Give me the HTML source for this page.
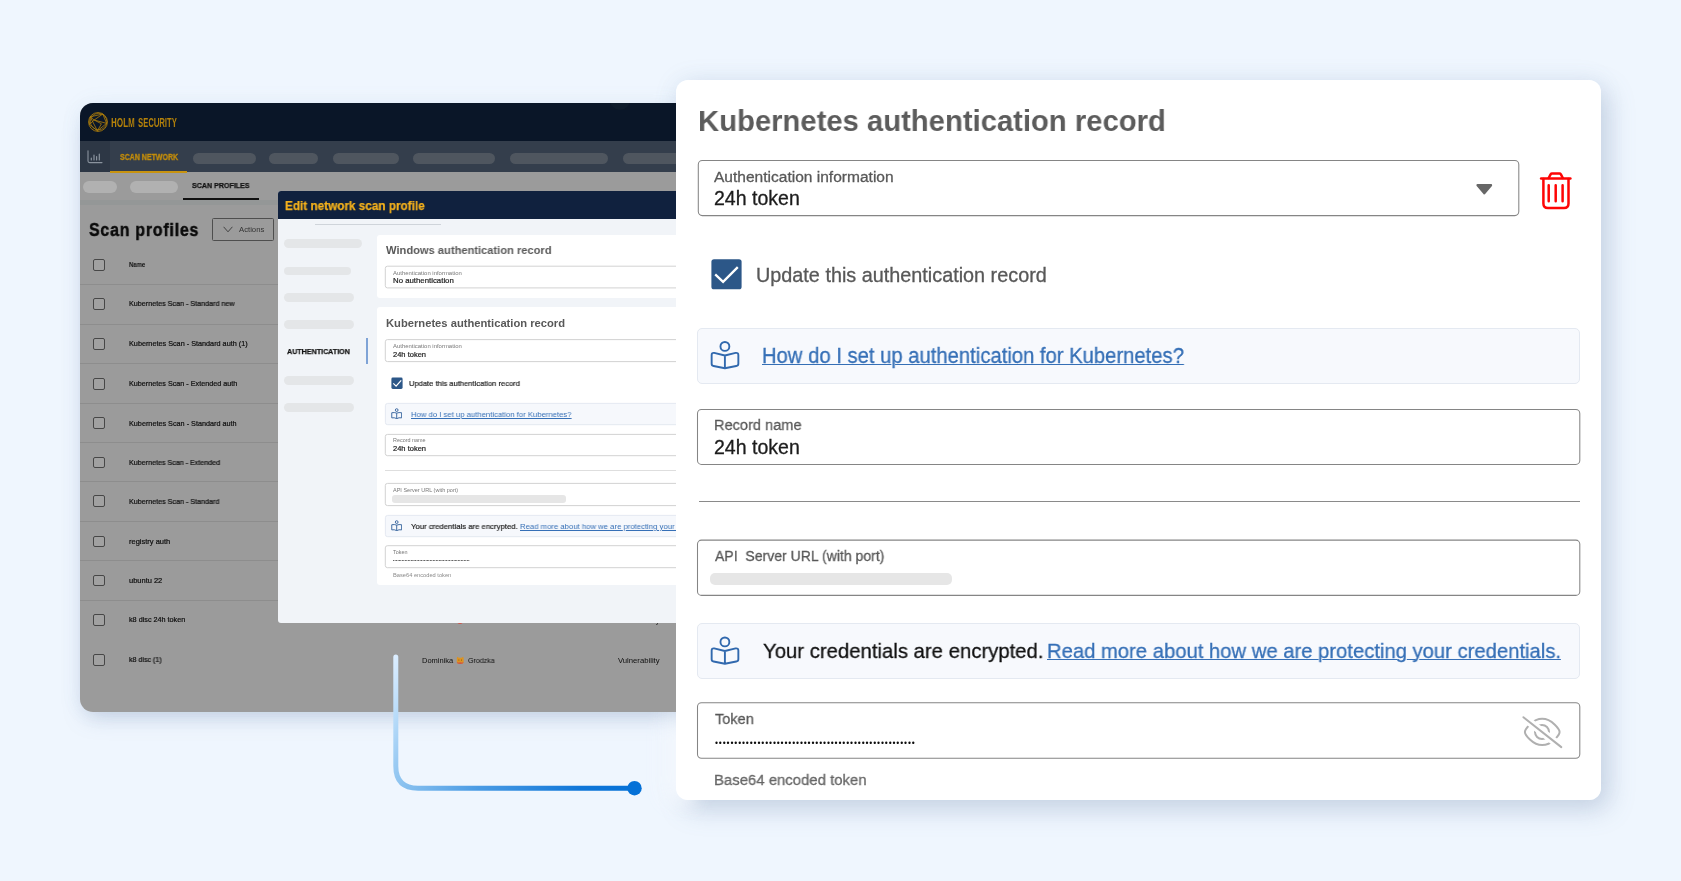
<!DOCTYPE html>
<html lang="en">
<head>
<meta charset="utf-8">
<title>Kubernetes authentication record</title>
<style>
*{box-sizing:border-box;margin:0;padding:0}
html,body{width:1681px;height:881px;overflow:hidden}
body{background:#eff6fe;font-family:"Liberation Sans",sans-serif;position:relative}
.abs,.t,.page,.clip{position:absolute}
.page{width:1681px;height:881px}
.clip{overflow:hidden}
.t{will-change:transform;white-space:nowrap;line-height:1em;transform-origin:0 0;display:block}
.pill{position:absolute;border-radius:10px}
.cb{position:absolute;width:11.4px;height:11.6px;left:93.3px;border:1px solid #474747;border-radius:2px;background:#a1a1a1}
.row{position:absolute;left:80px;width:600px;height:1px;background:#8d8d8d}
.binfo{position:absolute;border:1px solid #e4e9f1;border-radius:5px;background:#f7f9fd}
</style>
</head>
<body>


<!-- right card shadow (painted beneath the app screenshot) -->
<div class="abs" style="left:676px;top:80px;width:925px;height:720px;border-radius:12px;box-shadow:0 0 24px rgba(130,155,195,.11),8px 10px 26px rgba(105,130,168,.27)"></div>
<!-- ================= LEFT APP SCREENSHOT ================= -->
<div class="abs" style="left:80px;top:103px;width:600px;height:609px;border-radius:13px 0 0 13px;box-shadow:0 0 22px rgba(120,150,195,.07),0 10px 22px -6px rgba(105,130,168,.35)"></div>
<div class="abs" style="left:676px;top:716px;width:26px;height:80px;border-radius:0 0 0 12px;box-shadow:-10px 6px 20px 2px rgba(247,251,255,.9)"></div>
<div class="clip" id="left" style="left:80px;top:103px;width:610px;height:609px;border-radius:13px 0 0 13px;background:#9b9b9b">
 <div class="page" style="left:-80px;top:-103px">
  <!-- top bar -->
  <div class="abs" style="left:80px;top:103px;width:610px;height:38px;background:#0a1628"></div>
  <svg class="abs" style="left:87px;top:111px" width="22" height="22" viewBox="0 0 22 22" fill="none" stroke="#ad7d0b" stroke-width="0.9">
    <circle cx="11" cy="11" r="9.4"/>
    <circle cx="11.6" cy="10.6" r="8.2" stroke-width="0.7"/>
    <path d="M3.2 5.8 L15.8 3 L19.6 12.4 L10.4 19.8 L2.4 13.4 Z M3.2 5.8 L10.4 19.8 M15.8 3 L7.2 9 L19.6 12.4 M7.2 9 L2.4 13.4 M7.2 9 L3.2 5.8 M7.2 9 L14.4 12.8 L10.4 19.8" stroke-width="0.8"/>
  </svg>
  <div class="abs" style="left:610.3px;top:89.5px;width:20px;height:20px;border-radius:50%;background:#0e1b2b"></div>
  <!-- nav bar -->
  <div class="abs" style="left:80px;top:141px;width:610px;height:31px;background:#343e4c"></div>
  <div class="abs" style="left:80px;top:141px;width:30.2px;height:31px;background:#2d3745"></div>
  <svg class="abs" style="left:86.5px;top:150px" width="16" height="14" viewBox="0 0 16 14" fill="none" stroke="#8a939e" stroke-width="1.1" stroke-linecap="round">
    <path d="M1 0.8 V11 Q1 12.6 2.6 12.6 H15"/>
    <path d="M4.3 8.2 V10 M7 5 V10 M9.6 6.6 V10 M12.3 4.2 V10" stroke-width="1.2"/>
  </svg>
  <div class="abs" style="left:110.2px;top:170.8px;width:76.8px;height:1.8px;background:#c8930f"></div>
  <div class="pill" style="left:193px;top:152.7px;width:63px;height:11.3px;background:#4f565f"></div>
  <div class="pill" style="left:269px;top:152.7px;width:48.7px;height:11.3px;background:#4f565f"></div>
  <div class="pill" style="left:333.3px;top:152.7px;width:65.5px;height:11.3px;background:#4f565f"></div>
  <div class="pill" style="left:412.9px;top:152.7px;width:82.6px;height:11.3px;background:#4f565f"></div>
  <div class="pill" style="left:509.6px;top:152.7px;width:98.9px;height:11.3px;background:#4f565f"></div>
  <div class="pill" style="left:622.6px;top:152.7px;width:80px;height:11.3px;background:#4f565f"></div>
  <!-- sub bar -->
  <div class="pill" style="left:83px;top:181.2px;width:34.3px;height:11.7px;background:#b1b1b1"></div>
  <div class="pill" style="left:130.2px;top:181.2px;width:48px;height:11.7px;background:#b1b1b1"></div>
  <div class="abs" style="left:183px;top:198.3px;width:76px;height:1.7px;background:#111"></div>
  <div class="abs" style="left:80px;top:200px;width:610px;height:4.5px;background:#949797"></div>
  <!-- actions button -->
  <div class="abs" style="left:212px;top:218px;width:62px;height:22.8px;border:1px solid #4e4e4e;border-radius:1.5px"></div>
  <svg class="abs" style="left:223px;top:225.5px" width="10" height="7" viewBox="0 0 10 7" fill="none" stroke="#2c2c2c" stroke-width="0.8"><path d="M0.6 0.8 L5 5.8 L9.4 0.8"/></svg>
  <!-- table -->
  <div class="cb" style="top:259px"></div>
  <div class="row" style="top:284px"></div>
  <div class="cb" style="top:298.3px"></div>
  <div class="row" style="top:324px"></div>
  <div class="cb" style="top:338.3px"></div>
  <div class="row" style="top:363.4px"></div>
  <div class="cb" style="top:378px"></div>
  <div class="row" style="top:403px"></div>
  <div class="cb" style="top:417.4px"></div>
  <div class="row" style="top:442.3px"></div>
  <div class="cb" style="top:456.8px"></div>
  <div class="row" style="top:481.3px"></div>
  <div class="cb" style="top:495.4px"></div>
  <div class="row" style="top:521px"></div>
  <div class="cb" style="top:535.6px"></div>
  <div class="row" style="top:560.2px"></div>
  <div class="cb" style="top:574.6px"></div>
  <div class="row" style="top:600.2px"></div>
  <div class="cb" style="top:614px"></div>
  <div class="cb" style="top:654.1px"></div>
<span class="t" style="left:110.80px;top:116.26px;font-size:13.6px;color:#b5820a;font-weight:700;transform:scaleX(0.5945);">HOLM</span>
<span class="t" style="left:138.00px;top:116.26px;font-size:13.6px;color:#b5820a;font-weight:700;transform:scaleX(0.5651);">SECURITY</span>
<span class="t" style="left:119.80px;top:153.25px;font-size:8.9px;color:#c48d0a;font-weight:700;transform:scaleX(0.7913);-webkit-text-stroke:0.3px currentColor;">SCAN NETWORK</span>
<span class="t" style="left:192.25px;top:182.26px;font-size:7.8px;color:#111;font-weight:700;transform:scaleX(0.9104);-webkit-text-stroke:0.25px currentColor;">SCAN PROFILES</span>
<span class="t" style="left:88.50px;top:221.26px;font-size:18.7px;color:#0b0b0b;font-weight:700;letter-spacing:0.9px;transform:scaleX(0.8532);-webkit-text-stroke:0.45px currentColor;">Scan profiles</span>
<span class="t" style="left:239.00px;top:226.26px;font-size:7.6px;color:#333;transform:scaleX(1.0157);">Actions</span>
<span class="t" style="left:128.75px;top:262.26px;font-size:6.4px;color:#111;font-weight:700;transform:scaleX(0.9411);">Name</span>
<span class="t" style="left:128.75px;top:300.25px;font-size:7.2px;color:#0e0e0e;transform:scaleX(0.9959);-webkit-text-stroke:0.2px currentColor;">Kubernetes Scan - Standard new</span>
<span class="t" style="left:128.75px;top:340.25px;font-size:7.2px;color:#0e0e0e;transform:scaleX(1.0100);-webkit-text-stroke:0.2px currentColor;">Kubernetes Scan - Standard auth (1)</span>
<span class="t" style="left:128.75px;top:380.25px;font-size:7.2px;color:#0e0e0e;transform:scaleX(1.0033);-webkit-text-stroke:0.2px currentColor;">Kubernetes Scan - Extended auth</span>
<span class="t" style="left:128.75px;top:420.25px;font-size:7.2px;color:#0e0e0e;transform:scaleX(1.0090);-webkit-text-stroke:0.2px currentColor;">Kubernetes Scan - Standard auth</span>
<span class="t" style="left:128.75px;top:459.26px;font-size:7.2px;color:#0e0e0e;transform:scaleX(0.9907);-webkit-text-stroke:0.2px currentColor;">Kubernetes Scan - Extended</span>
<span class="t" style="left:128.75px;top:498.25px;font-size:7.2px;color:#0e0e0e;transform:scaleX(0.9950);-webkit-text-stroke:0.2px currentColor;">Kubernetes Scan - Standard</span>
<span class="t" style="left:128.75px;top:538.26px;font-size:7.2px;color:#0e0e0e;transform:scaleX(1.0429);-webkit-text-stroke:0.2px currentColor;">registry auth</span>
<span class="t" style="left:128.75px;top:577.26px;font-size:7.2px;color:#0e0e0e;transform:scaleX(1.0398);-webkit-text-stroke:0.2px currentColor;">ubuntu 22</span>
<span class="t" style="left:128.75px;top:616.26px;font-size:7.2px;color:#0e0e0e;transform:scaleX(1.0055);-webkit-text-stroke:0.2px currentColor;">k8 disc 24h token</span>
<span class="t" style="left:128.75px;top:656.26px;font-size:7.2px;color:#0e0e0e;transform:scaleX(0.9845);-webkit-text-stroke:0.2px currentColor;">k8 disc (1)</span>
<span class="t" style="left:421.80px;top:657.26px;font-size:7.2px;color:#0e0e0e;transform:scaleX(1.0447);">Dominika</span>
<span class="t" style="left:467.80px;top:657.26px;font-size:7.2px;color:#0e0e0e;transform:scaleX(0.9755);">Grodzka</span>
<span class="t" style="left:617.50px;top:657.26px;font-size:7.2px;color:#0e0e0e;transform:scaleX(1.0689);">Vulnerability</span>
<span class="t" style="left:617.50px;top:617.26px;font-size:7.2px;color:#0e0e0e;transform:scaleX(1.0689);">Vulnerability</span>
  <!-- cat emoji -->
  <svg class="abs" style="left:456px;top:656px" width="9" height="9" viewBox="0 0 9 9"><path d="M0.8 2.4 L1.1 0.7 L2.9 1.7 H5.5 L7.3 0.7 L7.6 2.4 V6 Q7.6 7.9 4.2 7.9 Q0.8 7.9 0.8 6 Z" fill="#dc9322"/><path d="M0.9 6 Q2 6.9 4.2 6.3 Q6.4 6.9 7.5 6 Q7.6 7.9 4.2 7.9 Q0.8 7.9 0.9 6 Z" fill="#cf5349"/><circle cx="2.9" cy="4" r="0.5" fill="#7a4a12"/><circle cx="5.5" cy="4" r="0.5" fill="#7a4a12"/></svg>
  <div class="abs" style="left:457px;top:619px;width:6.3px;height:5px;border-radius:0 0 3px 3px;background:#cf5349"></div>

  <!-- ============ modal ============ -->
  <div class="clip" style="left:278px;top:191px;width:420px;height:432px;border-radius:3px 0 0 3px;background:#f1f4f8">
   <div class="page" style="left:-278px;top:-191px">
    <div class="abs" style="left:278px;top:191px;width:420px;height:28px;background:#10213e"></div>
    <div class="abs" style="left:314.5px;top:223.7px;width:126.3px;height:0.8px;background:#cfd4da"></div>
    <!-- sidebar -->
    <div class="pill" style="left:284px;top:239px;width:77.5px;height:8.6px;background:#e4e6e8"></div>
    <div class="pill" style="left:284px;top:266.6px;width:67px;height:8.6px;background:#e4e6e8"></div>
    <div class="pill" style="left:284px;top:293px;width:70px;height:8.6px;background:#e4e6e8"></div>
    <div class="pill" style="left:284px;top:320.2px;width:70px;height:8.6px;background:#e4e6e8"></div>
    <div class="abs" style="left:366.2px;top:337.5px;width:1.8px;height:26.5px;background:#7fa3d6"></div>
    <div class="pill" style="left:284px;top:376px;width:70px;height:8.6px;background:#e4e6e8"></div>
    <div class="pill" style="left:284px;top:403px;width:70px;height:8.8px;background:#e4e6e8"></div>
    <!-- card 1 -->
    <div class="abs" style="left:376.5px;top:234.5px;width:320px;height:63px;background:#fff;border-radius:3px 0 0 3px"></div>
    <!-- card 2 -->
    <div class="abs" style="left:376.5px;top:306.8px;width:320px;height:278.2px;background:#fff;border-radius:3px 0 0 3px"></div>
    <svg class="abs" style="left:376px;top:230px" width="320" height="360" viewBox="376 230 320 360" fill="#fff" stroke="#cdcdcd" stroke-width="0.9">
      <rect x="385.3" y="266.2" width="330" height="21.7" rx="2.2"/>
      <rect x="385.3" y="339.6" width="330" height="22" rx="2.2"/>
      <rect x="385.3" y="434.4" width="330" height="21.3" rx="2.2"/>
      <rect x="385.3" y="483.4" width="330" height="22.2" rx="2.2"/>
      <rect x="385.3" y="545.7" width="330" height="22" rx="2.2"/>
      <rect x="385.4" y="403.4" width="330" height="21.3" rx="2.2" fill="#f6f8fc" stroke="#e2e7ef"/>
      <rect x="385.4" y="515.4" width="330" height="21.3" rx="2.2" fill="#f6f8fc" stroke="#e2e7ef"/>
      <rect x="391.4" y="377.5" width="11.2" height="11.5" rx="1.4" fill="#2c5788" stroke="none"/>
      <path d="M393.3 383.4 L396.1 386.2 L401.2 380.4" fill="none" stroke="#fff" stroke-width="1.2"/>
    </svg>
    <svg class="abs" style="left:390.8px;top:407.8px" width="11.4" height="11.4" viewBox="0 0 30 30" fill="none" stroke="#2f5f9a" stroke-width="2.4" stroke-linejoin="round"><circle cx="15" cy="5.5" r="3.6"/><path d="M15 13.5 Q9 11 2 12.5 V26 Q9 24.5 15 28 Q21 24.5 28 26 V12.5 Q21 11 15 13.5 V28"/></svg>
    <div class="abs" style="left:385px;top:469.6px;width:320px;height:0.8px;background:#dedede"></div>
    <div class="pill" style="left:392px;top:494.7px;width:174.3px;height:8.4px;background:#e6e6e6;border-radius:3px"></div>
    <svg class="abs" style="left:390.8px;top:519.8px" width="11.4" height="11.4" viewBox="0 0 30 30" fill="none" stroke="#2f5f9a" stroke-width="2.4" stroke-linejoin="round"><circle cx="15" cy="5.5" r="3.6"/><path d="M15 13.5 Q9 11 2 12.5 V26 Q9 24.5 15 28 Q21 24.5 28 26 V12.5 Q21 11 15 13.5 V28"/></svg>
    <span class="t" style="left:284.50px;top:200.26px;font-size:12.6px;color:#f4b11c;font-weight:700;transform:scaleX(0.9332);-webkit-text-stroke:0.25px currentColor;">Edit network scan profile</span>
<span class="t" style="left:286.75px;top:348.25px;font-size:7.6px;color:#111;font-weight:700;transform:scaleX(0.9391);-webkit-text-stroke:0.25px currentColor;">AUTHENTICATION</span>
<span class="t" style="left:385.75px;top:245.26px;font-size:11.2px;color:#585858;font-weight:700;transform:scaleX(0.9946);">Windows authentication record</span>
<span class="t" style="left:392.50px;top:271.26px;font-size:5.4px;color:#777;transform:scaleX(1.1030);">Authentication information</span>
<span class="t" style="left:392.50px;top:277.25px;font-size:7.3px;color:#222;transform:scaleX(1.0708);-webkit-text-stroke:0.2px currentColor;">No authentication</span>
<span class="t" style="left:385.75px;top:318.26px;font-size:11.2px;color:#585858;font-weight:700;">Kubernetes authentication record</span>
<span class="t" style="left:392.50px;top:344.26px;font-size:5.4px;color:#777;transform:scaleX(1.1030);">Authentication information</span>
<span class="t" style="left:392.50px;top:351.25px;font-size:7.3px;color:#222;transform:scaleX(1.0314);-webkit-text-stroke:0.2px currentColor;">24h token</span>
<span class="t" style="left:408.75px;top:380.25px;font-size:7.9px;color:#222;transform:scaleX(0.9574);-webkit-text-stroke:0.2px currentColor;">Update this authentication record</span>
<span class="t" style="left:411.00px;top:411.26px;font-size:8.0px;color:#356fb6;transform:scaleX(0.9622);text-decoration:underline;text-decoration-thickness:0.6px;text-underline-offset:1px;">How do I set up authentication for Kubernetes?</span>
<span class="t" style="left:392.50px;top:438.26px;font-size:5.4px;color:#777;transform:scaleX(1.0043);">Record name</span>
<span class="t" style="left:392.50px;top:445.25px;font-size:7.3px;color:#222;transform:scaleX(1.0314);-webkit-text-stroke:0.2px currentColor;">24h token</span>
<span class="t" style="left:392.50px;top:488.26px;font-size:5.4px;color:#777;transform:scaleX(1.0233);">API Server URL (with port)</span>
<span class="t" style="left:411.00px;top:523.26px;font-size:7.9px;color:#222;transform:scaleX(0.9794);-webkit-text-stroke:0.2px currentColor;">Your credentials are encrypted.</span>
<span class="t" style="left:519.75px;top:523.26px;font-size:7.9px;color:#356fb6;transform:scaleX(0.9788);text-decoration:underline;text-decoration-thickness:0.6px;text-underline-offset:1px;">Read more about how we are protecting your credentials.</span>
<span class="t" style="left:392.50px;top:550.26px;font-size:5.4px;color:#777;transform:scaleX(1.0080);">Token</span>
<span class="t" style="left:392.60px;top:560.26px;font-size:3.4px;color:#111;letter-spacing:0.286px;">••••••••••••••••••••••••••••••••••••••••••••••••••••</span>
<span class="t" style="left:392.50px;top:573.26px;font-size:5.4px;color:#8a8a8a;transform:scaleX(1.0562);">Base64 encoded token</span>
   </div>
  </div>
 </div>
</div>

<!-- connector -->
<svg class="abs" style="left:380px;top:645px" width="280" height="160" viewBox="380 645 280 160" fill="none">
  <defs>
    <linearGradient id="cg" gradientUnits="userSpaceOnUse" x1="396" y1="655" x2="634" y2="788">
      <stop offset="0" stop-color="#dbedff"/>
      <stop offset="0.12" stop-color="#b4d9f8"/>
      <stop offset="0.19" stop-color="#9bcbf3"/>
      <stop offset="0.238" stop-color="#8ec4f0"/>
      <stop offset="0.5" stop-color="#4a9be4"/>
      <stop offset="0.83" stop-color="#0f76d8"/>
      <stop offset="1" stop-color="#0571d7"/>
    </linearGradient>
  </defs>
  <path d="M395.8 657 V766 Q395.8 788.2 418 788.2 H634" stroke="url(#cg)" stroke-width="5" stroke-linecap="round"/>
  <circle cx="634.5" cy="788.2" r="7.2" fill="#0571d7"/>
</svg>

<!-- ================= RIGHT CARD ================= -->
<div class="abs" style="left:676px;top:80px;width:925px;height:720px;border-radius:12px;background:#fff"></div>

<svg class="abs" style="left:676px;top:80px" width="925" height="720" viewBox="676 80 925 720" fill="#fff" stroke="#858585" stroke-width="1.05">
  <rect x="698.3" y="160.5" width="820.5" height="55.1" rx="4"/>
  <rect x="697.5" y="409.5" width="882.3" height="54.9" rx="4"/>
  <rect x="697.5" y="540.1" width="882.3" height="55.3" rx="4"/>
  <rect x="697.5" y="702.7" width="882.3" height="55.6" rx="4"/>
</svg>
<svg class="abs" style="left:1474px;top:182px" width="22" height="16" viewBox="0 0 22 16"><path d="M3.5 3.2 H17.1 L10.3 11.4 Z" fill="#676767" stroke="#676767" stroke-width="2.2" stroke-linejoin="round"/></svg>
<svg class="abs" style="left:1538px;top:170px" width="36" height="42" viewBox="0 0 36 42" fill="none" stroke="#fe0505" stroke-width="2.5" stroke-linecap="round" stroke-linejoin="round">
  <path d="M3.1 8.6 H32.4"/>
  <path d="M10.7 8 L12.6 4.4 Q13.1 3.6 14 3.6 H21.5 Q22.4 3.6 22.9 4.4 L24.8 8"/>
  <path d="M5.4 9 V33.4 Q5.4 37.9 9.9 37.9 H26 Q30.5 37.9 30.5 33.4 V9"/>
  <path d="M10.7 15.2 V31.2 M17.7 15.2 V31.2 M24.6 15.2 V31.2"/>
</svg>

<svg class="abs" style="left:710px;top:258px" width="34" height="34" viewBox="0 0 34 34" fill="none"><rect x="1.4" y="1.2" width="30.2" height="30.1" rx="2.6" fill="#2c5788"/><path d="M5.2 16.3 L13.1 23.9 L27.8 9.1" stroke="#fff" stroke-width="2.3"/></svg>

<div class="binfo" style="left:696.8px;top:327.8px;width:883.2px;height:56.2px"></div>
<svg class="abs" style="left:708px;top:338px" width="34" height="34" viewBox="0 0 34 34" fill="none" stroke="#3169ae" stroke-width="1.9" stroke-linejoin="round"><circle cx="16.9" cy="8.4" r="4.45"/><path transform="translate(0 0)" d="M16.9 17.5 L6.2 14.9 Q3.65 14.5 3.65 17 V25.7 Q3.65 27.6 5.6 28 L16.9 30.3 L28.2 28 Q30.35 27.6 30.35 25.7 V17 Q30.35 14.5 27.6 14.9 L16.9 17.5 V30.3"/></svg>

<div class="abs" style="left:699px;top:501.2px;width:880.5px;height:1.1px;background:#8a8a8a"></div>
<div class="pill" style="left:710px;top:573.2px;width:241.5px;height:11.8px;background:#e6e6e6;border-radius:5px"></div>

<div class="binfo" style="left:696.8px;top:623px;width:883.2px;height:56px"></div>
<svg class="abs" style="left:708px;top:633px" width="34" height="34" viewBox="0 0 34 34" fill="none" stroke="#3169ae" stroke-width="1.9" stroke-linejoin="round"><circle cx="16.9" cy="8.9" r="4.45"/><path transform="translate(0 0.5)" d="M16.9 17.5 L6.2 14.9 Q3.65 14.5 3.65 17 V25.7 Q3.65 27.6 5.6 28 L16.9 30.3 L28.2 28 Q30.35 27.6 30.35 25.7 V17 Q30.35 14.5 27.6 14.9 L16.9 17.5 V30.3"/></svg>

<svg class="abs" style="left:1520px;top:712px" width="46" height="40" viewBox="0 0 46 40" fill="none" stroke="#b0b0b0" stroke-width="2" stroke-linecap="round" stroke-linejoin="round">
  <path d="M4.9 20 C4.9 17.5 12.5 6.8 22.2 6.8 C32 6.8 39.6 17.5 39.6 20 C39.6 22.5 32 33.1 22.2 33.1 C12.5 33.1 4.9 22.5 4.9 20 Z"/>
  <circle cx="22" cy="20" r="7"/>
  <path d="M5.5 6.9 L39.5 33.7" stroke="#fff" stroke-width="8" stroke-linecap="butt"/>
  <path d="M3.4 5.2 L41.3 35.1"/>
</svg>
<span class="t" style="left:697.57px;top:106.25px;font-size:30.3px;color:#5c5c5c;font-weight:700;transform:scaleX(0.9650);">Kubernetes authentication record</span>
<span class="t" style="left:714.25px;top:169.26px;font-size:15.5px;color:#585858;transform:scaleX(1.0022);-webkit-text-stroke:0.3px currentColor;">Authentication information</span>
<span class="t" style="left:714.30px;top:189.26px;font-size:19.4px;color:#1c1c1c;transform:scaleX(1.0072);-webkit-text-stroke:0.3px currentColor;">24h token</span>
<span class="t" style="left:755.72px;top:266.25px;font-size:19.3px;color:#585858;transform:scaleX(1.0276);-webkit-text-stroke:0.3px currentColor;">Update this authentication record</span>
<span class="t" style="left:762.31px;top:345.26px;font-size:21.6px;color:#356fb6;transform:scaleX(0.9373);text-decoration:underline;text-decoration-thickness:1.3px;text-underline-offset:1px;-webkit-text-stroke:0.3px currentColor;">How do I set up authentication for Kubernetes?</span>
<span class="t" style="left:714.06px;top:417.26px;font-size:15.5px;color:#585858;transform:scaleX(0.9407);-webkit-text-stroke:0.3px currentColor;">Record name</span>
<span class="t" style="left:714.30px;top:438.26px;font-size:19.4px;color:#1c1c1c;transform:scaleX(1.0072);-webkit-text-stroke:0.3px currentColor;">24h token</span>
<span class="t" style="left:714.50px;top:548.25px;font-size:15.5px;color:#585858;transform:scaleX(0.9048);-webkit-text-stroke:0.3px currentColor;">API&nbsp; Server URL (with port)</span>
<span class="t" style="left:763.25px;top:640.25px;font-size:21.1px;color:#111;transform:scaleX(0.9634);-webkit-text-stroke:0.3px currentColor;">Your credentials are encrypted.</span>
<span class="t" style="left:1047.29px;top:640.25px;font-size:21.1px;color:#356fb6;transform:scaleX(0.9593);text-decoration:underline;text-decoration-thickness:1.3px;text-underline-offset:1px;-webkit-text-stroke:0.3px currentColor;">Read more about how we are protecting your credentials.</span>
<span class="t" style="left:714.50px;top:711.25px;font-size:15.5px;color:#585858;transform:scaleX(0.9389);-webkit-text-stroke:0.3px currentColor;">Token</span>
<span class="t" style="left:715.00px;top:739.25px;font-size:8.6px;color:#0d0d0d;letter-spacing:0.85px;">••••••••••••••••••••••••••••••••••••••••••••••••••••</span>
<span class="t" style="left:713.54px;top:772.25px;font-size:15.5px;color:#666;transform:scaleX(0.9621);-webkit-text-stroke:0.3px currentColor;">Base64 encoded token</span>
</body>
</html>
